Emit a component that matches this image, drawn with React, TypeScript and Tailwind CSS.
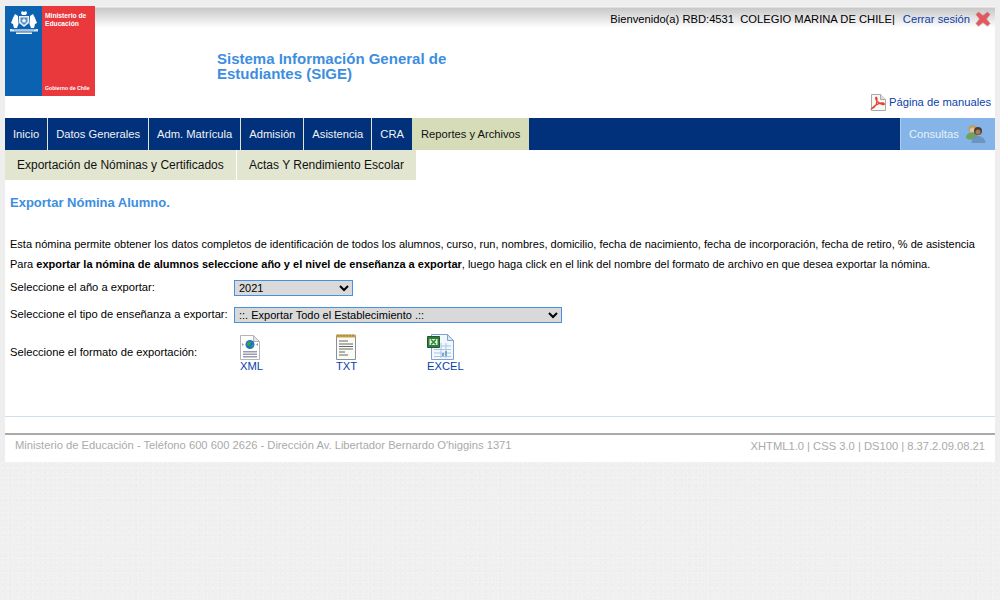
const font = "font-['Liberation_Sans',Arial,sans-serif]";

const navItems = [
  "Inicio",
  "Datos Generales",
  "Adm. Matrícula",
  "Admisión",
  "Asistencia",
  "CRA",
];

function Crest() {
  return (
    <svg width="30" height="25" viewBox="0 0 30 25" className="absolute left-[4px] top-[4px]">
      <path d="M12 3l1-2 2 1 2-1 1 2-1 2h-4z" fill="#fff" />
      <path d="M10 6h10v7l-5 4-5-4z" fill="#e4edf6" />
      <path d="M11.500 7.500h7V12l-3.500 3-3.500-3z" fill="#5b8fc4" />
      <path d="M15 8l.8 1.700 1.700.2-1.300 1.200.4 1.700-1.600-.9-1.600.9.4-1.700-1.300-1.200 1.700-.2z" fill="#fff" />
      <path d="M9 6L6 4 4 8l-2 5 2 1 1 4h3l1.500-4zM21 6l3-2 2 4 2 5-2 1-1 4h-3l-1.500-4z" fill="#fff" />
      <path d="M1 19h28v2.500H1z" fill="#dce8f3" />
      <path d="M3 19.500h24M5 20.700h20" stroke="#5b8fc4" strokeWidth=".5" />
      <path d="M7 22.500h16V24H7z" fill="#fff" />
    </svg>
  );
}

function CloseIcon() {
  return (
    <svg width="16" height="16" viewBox="0 0 16 16">
      <path
        d="M3.500.800L8 4.300 12.500.800l2.700 2.700L11.700 8l3.500 4.500-2.700 2.700L8 11.700l-4.500 3.500-2.700-2.700L4.300 8 .8 3.500z"
        fill="#e2585c"
        stroke="#c4b0b0"
        strokeWidth=".8"
      />
    </svg>
  );
}

function PdfIcon() {
  return (
    <svg width="16" height="17" viewBox="0 0 16 17">
      <path d="M1.500.500h9l5 5v11h-14z" fill="#f7f7f7" stroke="#a8a8a8" />
      <path d="M10.500.500v5h5" fill="#e0e0e0" stroke="#a8a8a8" />
      <path
        d="M2 14.500c3-1 5-5 5-9 0-2-1-3-1.300-1.500-.2 2 3 6 7.300 6.500 2 .2 1.500-1.500-.5-1.500-3 0-7 1.500-10.500 5.500z"
        fill="none"
        stroke="#e8402f"
        strokeWidth="1.300"
      />
    </svg>
  );
}

function UsersIcon() {
  return (
    <svg width="22" height="20" viewBox="0 0 22 20">
      <circle cx="7.500" cy="5" r="4" fill="#b99f68" />
      <circle cx="7.500" cy="6" r="2.600" fill="#e3c39a" />
      <path d="M1 14c0-4 3-5.500 6.500-5.500S13 10 13 14l-4 1.500H3z" fill="#6da35c" />
      <circle cx="13" cy="7" r="4" fill="#4f3a2e" />
      <circle cx="13" cy="8" r="2.600" fill="#a87a58" />
      <path d="M6.500 19c0-5 3-7 6.500-7s7 2 7.500 7z" fill="#6c94bf" />
    </svg>
  );
}

function XmlIcon() {
  return (
    <svg width="20" height="25" viewBox="0 0 20 25">
      <path d="M.5.500h13l6 6v18H.5z" fill="#fff" stroke="#b5b5b5" />
      <path d="M13.500.500v6h6z" fill="#e4e4e4" stroke="#b5b5b5" />
      <circle cx="10" cy="9.500" r="4.500" fill="#1f73c7" />
      <path d="M7 7.500l3-1.500 1 2-2 3-2-1zM11 11l2-1.500.5 1.500-1.500 2z" fill="#3fa33f" />
      <path d="M4 9.500L2 8v3zM16 9.500L18 8v3z" fill="#9a9a9a" />
      <path d="M3 16h14v1.500H3zM3 18.500h14V20H3zM3 21h14v1.500H3z" fill="#9b9bb0" />
    </svg>
  );
}

function TxtIcon() {
  return (
    <svg width="20" height="26" viewBox="0 0 20 26">
      <path d="M.5 1.500h19v24H.5z" fill="#fbfbf6" stroke="#8a8f99" />
      <path d="M.5.500h19v3H.5z" fill="#c9a54a" />
      <path d="M2 .500v2M5 .500v2M8 .500v2M11 .500v2M14 .500v2M17 .500v2" stroke="#8f7a3a" />
      <path d="M3 7h9M3 10h14M3 12.500h14M3 15h14M3 18h6M3 21h9" stroke="#666" />
    </svg>
  );
}

function ExcelIcon() {
  return (
    <svg width="27" height="26" viewBox="0 0 27 26">
      <path d="M4.500.500h16l6 6v19h-22z" fill="#f2f7fd" stroke="#7fa3cf" />
      <path d="M20.500.500v6h6z" fill="#d9e6f5" stroke="#7fa3cf" />
      <path d="M7 15.500h17M7 19h17M7 22.500h17M14 9v15M19 9v15M14 12h10" stroke="#a9c4e4" />
      <path d="M15 22v-3h2v3zM18 22v-5h2v5z" fill="#7fa3cf" />
      <path d="M.5 2.500h12v11H.5z" fill="#2f7d3a" stroke="#1f5c2a" />
      <path d="M2.500 5h8v6h-8z" fill="#e9f3e2" />
      <path d="M4 5.500l5 5M9 5.500l-5 5" stroke="#2f8a3c" strokeWidth="1.600" />
    </svg>
  );
}

function ExportLink({ label, children }: { label: string; children: React.ReactNode }) {
  return (
    <a className="flex flex-col items-start text-[11.2px] leading-[13px] text-[#0b3fa8]">
      {children}
      <span>{label}</span>
    </a>
  );
}

export default function App() {
  return (
    <div className={`${font} min-h-[600px] bg-[#f0f0f0] bg-[radial-gradient(#ededed_1px,transparent_1px),radial-gradient(#f4f4f4_1px,transparent_1px),radial-gradient(#ececec_1px,transparent_1px)] bg-[length:3px_3px,5px_5px,7px_7px] opacity-[.999]`}>
      <div className="bg-[#eeeeee] px-[5px] pt-[6px]">
        <div className="h-[456px] bg-white">
          {/* Header */}
          <header className="flex h-[112px] bg-[linear-gradient(#f4f4f4_1px,#c8c8c8_2px,#ffffff_22px)]">
            <div className="relative flex h-[90px] w-[90px] shrink-0">
              <div className="w-[37px] shrink-0 bg-[#0a62b0]" />
              <div className="flex min-w-0 flex-1 flex-col justify-between bg-[#e9393d] px-[3px] pb-[4px] pt-[6px] text-[6.7px] font-bold leading-[8px] text-white">
                <span>Ministerio de Educación</span>
                <span className="whitespace-nowrap text-[5.200px]">Gobierno de Chile</span>
              </div>
              <Crest />
            </div>
            <h1 className="ml-[122px] mt-[45px] w-[260px] text-[15px] font-bold leading-[15px] text-[#3d8ee0]">
              Sistema Información General de Estudiantes (SIGE)
            </h1>
            <div className="ml-auto flex flex-col items-end justify-between pb-[7px] pr-[4px] pt-[5px]">
              <div className="flex items-center text-[11.2px] text-black">
                <span className="whitespace-pre">Bienvenido(a) RBD:4531  COLEGIO MARINA DE CHILE|</span>
                <a className="ml-[8px] text-[#0b3fa8]">Cerrar sesión</a>
                <span className="ml-[5px]">
                  <CloseIcon />
                </span>
              </div>
              <div className="flex items-center text-[11.2px] text-[#0b3fa8]">
                <PdfIcon />
                <a className="ml-[3px]">Página de manuales</a>
              </div>
            </div>
          </header>

          {/* Nav */}
          <nav className="flex h-[32px] bg-[#00317a] text-[11.2px]">
            {navItems.map((item) => (
              <a key={item} className="flex items-center border-r border-[#e2e6d0] px-[8px] text-[#f0f2f6]">
                {item}
              </a>
            ))}
            <a className="-ml-px flex items-center bg-[#d6dbb8] px-[9px] text-[#111]">Reportes y Archivos</a>
            <a className="ml-auto flex w-[95px] items-center border-l border-[#a9ccf0] bg-[#85b5e8] pl-[8px] text-[#e8f0f8]">
              Consultas
              <span className="ml-[6px]">
                <UsersIcon />
              </span>
            </a>
          </nav>

          {/* Sub nav */}
          <div className="flex h-[30px] text-[12px] text-[#111]">
            <a className="flex w-[231px] items-center bg-[#e2e6d0] px-[12px]">Exportación de Nóminas y Certificados</a>
            <a className="ml-px flex w-[179px] items-center bg-[#e2e6d0] px-[12px]">Actas Y Rendimiento Escolar</a>
          </div>

          {/* Content */}
          <main className="px-[5px] text-[11px] text-black">
            <h2 className="mt-[15px] text-[13px] font-bold leading-[16px] text-[#3d8ee0]">Exportar Nómina Alumno.</h2>
            <p className="mt-[25px] leading-[16px]">
              Esta nómina permite obtener los datos completos de identificación de todos los alumnos, curso, run, nombres, domicilio, fecha de nacimiento, fecha de incorporación, fecha de retiro, % de asistencia
            </p>
            <p className="mt-[4px] leading-[16px]">
              Para <b>exportar la nómina de alumnos seleccione año y el nivel de enseñanza a exportar</b>, luego haga click en el link del nombre del formato de archivo en que desea exportar la nómina.
            </p>

            <div className="mt-[8px] flex h-[16px] items-start">
              <label className="w-[224px] text-[11.2px] leading-[14px]">Seleccione el año a exportar:</label>
              <select className="h-[16px] w-[119px] border border-[#4a90e2] bg-[#d9d9d9] text-[11px] text-black">
                <option>2021</option>
              </select>
            </div>
            <div className="mt-[11px] flex h-[16px] items-start">
              <label className="w-[224px] text-[11.2px] leading-[14px]">Seleccione el tipo de enseñanza a exportar:</label>
              <select className="h-[16px] w-[328px] border border-[#4a90e2] bg-[#d9d9d9] text-[11px] text-black">
                <option>::. Exportar Todo el Establecimiento .::</option>
              </select>
            </div>
            <div className="mt-[11px] flex items-center">
              <label className="mb-[2px] w-[230px] text-[11.2px]">Seleccione el formato de exportación:</label>
              <div className="w-[96px]">
                <ExportLink label="XML">
                  <XmlIcon />
                </ExportLink>
              </div>
              <div className="w-[91px]">
                <ExportLink label="TXT">
                  <TxtIcon />
                </ExportLink>
              </div>
              <ExportLink label="EXCEL">
                <ExcelIcon />
              </ExportLink>
            </div>
          </main>

          {/* Footer */}
          <footer className="mt-[43px] border-t border-[#cfe0ea] pt-[16px]">
            <div className="flex h-[28px] items-start justify-between border-t-2 border-[#aaaaaa] px-[10px] pt-[2px] text-[11.2px] leading-[16px] text-[#aaaaaa]">
              <span>Ministerio de Educación - Teléfono 600 600 2626 - Dirección Av. Libertador Bernardo O'higgins 1371</span>
              <span className="mt-[1px]">XHTML1.0 | CSS 3.0 | DS100 | 8.37.2.09.08.21</span>
            </div>
          </footer>
        </div>
      </div>
    </div>
  );
}
